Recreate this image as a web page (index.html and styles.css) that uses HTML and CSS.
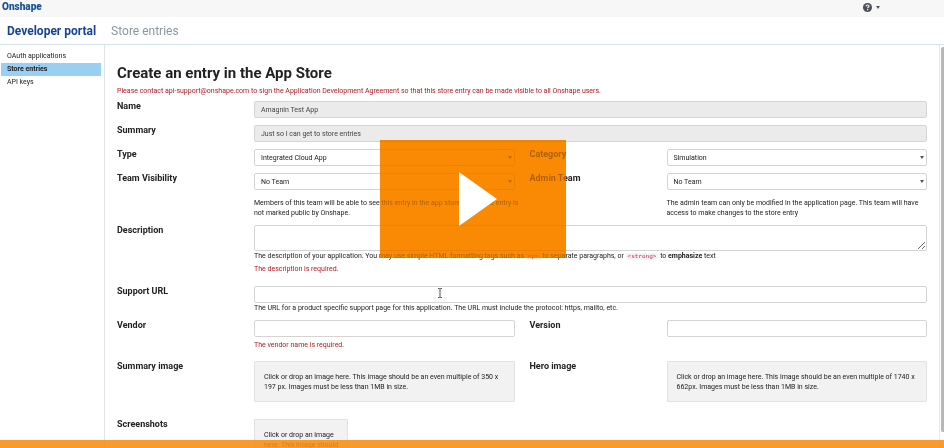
FILE: index.html
```html
<!DOCTYPE html>
<html lang="en">
<head>
<meta charset="utf-8">
<title>Developer portal</title>
<link rel="stylesheet" href="styles.css">
</head>
<body>
<header class="topbar">
  <a class="brand" href="#">Onshape</a>
  <button class="help" type="button" aria-label="Help">
    <svg class="help-icon" viewBox="0 0 18 18" aria-hidden="true"><circle cx="9" cy="9" r="9" fill="#4a4f55"/><path d="M6 6.800C6.200 4.900 7.400 4 9 4s3 .9 3 2.500c0 2-2.700 2.100-2.700 4.200" fill="none" stroke="#f7f7f7" stroke-width="2.400"/><circle cx="9.200" cy="13.600" r="1.500" fill="#f7f7f7"/></svg>
    <span class="caret"></span>
  </button>
</header>
<nav class="crumbs">
  <a class="portal" href="#">Developer portal</a>
  <a class="section" href="#">Store entries</a>
</nav>
<div class="layout">
  <nav class="sidebar">
    <a href="#">OAuth applications</a>
    <a class="active" href="#">Store entries</a>
    <a href="#">API keys</a>
  </nav>
  <main class="content">
    <h1>Create an entry in the App Store</h1>
    <p class="notice">Please contact api-support@onshape.com to sign the Application Development Agreement so that this store entry can be made visible to all Onshape users.</p>
    <form class="form">
      <div class="field">
        <label for="name">Name</label>
        <input id="name" type="text" value="Amagnin Test App" disabled>
      </div>
      <div class="field">
        <label for="summary">Summary</label>
        <input id="summary" type="text" value="Just so I can get to store entries" disabled>
      </div>
      <div class="pair">
        <div class="field">
          <label for="type">Type</label>
          <div class="select"><select id="type"><option>Integrated Cloud App</option></select></div>
        </div>
        <div class="field">
          <label for="category">Category</label>
          <div class="select"><select id="category"><option>Simulation</option></select></div>
        </div>
      </div>
      <div class="pair">
        <div class="field">
          <label for="team">Team Visibility</label>
          <div>
            <div class="select"><select id="team"><option>No Team</option></select></div>
            <p class="hint spaced">Members of this team will be able to see this entry in the app store even if the entry is<br>not marked public by Onshape.</p>
          </div>
        </div>
        <div class="field">
          <label for="admin">Admin Team</label>
          <div>
            <div class="select"><select id="admin"><option>No Team</option></select></div>
            <p class="hint spaced">The admin team can only be modified in the application page. This team will have<br>access to make changes to the store entry</p>
          </div>
        </div>
      </div>
      <div class="field roomy">
        <label for="description">Description</label>
        <div>
          <textarea id="description"></textarea>
          <p class="hint">The description of your application. You may use simple HTML formatting tags such as <code>&lt;p&gt;</code> to separate paragraphs, or <code>&lt;strong&gt;</code> to <strong>emphasize</strong> text</p>
          <p class="error">The description is required.</p>
        </div>
      </div>
      <div class="field">
        <label for="url">Support URL</label>
        <div>
          <div class="pointed">
            <input id="url" type="text">
            <svg class="ibeam" viewBox="0 0 6 10" aria-hidden="true"><path d="M1 .5h1.500L3 1l.5-.5H5M3 1v8M1 9.500h1.500L3 9l.5.5H5" fill="none" stroke="#555"/></svg>
          </div>
          <p class="hint">The URL for a product specific support page for this application. The URL must include the protocol: https, mailto, etc.</p>
        </div>
      </div>
      <div class="pair vendor-row">
        <div class="field">
          <label for="vendor">Vendor</label>
          <div>
            <input id="vendor" type="text">
            <p class="error">The vendor name is required.</p>
          </div>
        </div>
        <div class="field">
          <label for="version">Version</label>
          <input id="version" type="text">
        </div>
      </div>
      <div class="pair images">
        <div class="field">
          <label for="summary-image">Summary image</label>
          <button class="drop" id="summary-image" type="button">Click or drop an image here. This image should be an even multiple of 350 x 197 px. Images must be less than 1MB in size.</button>
        </div>
        <div class="field">
          <label for="hero-image">Hero image</label>
          <button class="drop" id="hero-image" type="button">Click or drop an image here. This image should be an even multiple of 1740 x 662px. Images must be less than 1MB in size.</button>
        </div>
      </div>
      <div class="field">
        <label for="screenshots">Screenshots</label>
        <button class="drop small" id="screenshots" type="button">Click or drop an image here. This image should</button>
      </div>
    </form>
  </main>
  <div class="scrollbar"></div>
</div>
<div class="play-area tint"></div>
<button class="play-area play" type="button" aria-label="Play video">
  <svg class="play-icon" viewBox="0 0 38 54" aria-hidden="true"><path d="M0 0l38 27L0 54z" fill="#fff"/></svg>
</button>
<div class="progress"></div>
</body>
</html>
```
FILE: styles.css
```css
* { box-sizing: border-box; }

body {
  margin: 0;
  height: 100vh;
  overflow: hidden;
  display: flex;
  flex-direction: column;
  position: relative;
  background: #fff;
  color: #222;
  font: 7px/10px Roboto, "Liberation Sans", sans-serif;
}

a { color: inherit; text-decoration: none; }
p, h1 { margin: 0; }
button, input, select, textarea { font: inherit; color: inherit; margin: 0; }

.topbar {
  flex: none;
  display: flex;
  align-items: center;
  justify-content: space-between;
  height: 17px;
  padding: 0 64px 3px 2px;
  background: #f7f7f7;
}
.brand { color: #17509a; font-size: 10px; line-height: 14px; font-weight: 900; }
.help {
  display: flex;
  align-items: center;
  gap: 4px;
  padding: 0;
  border: 0;
  background: none;
}
.help-icon { width: 9px; height: 9px; }
.caret, .select::after {
  border: 2px solid transparent;
  border-top: 3px solid #555;
  border-bottom: 0;
}

.crumbs {
  flex: none;
  display: flex;
  align-items: center;
  gap: 15px;
  height: 28px;
  padding: 1px 7px 0;
  border-bottom: 1px solid #d5e2e6;
  font-size: 12px;
  line-height: 16px;
}
.portal { color: #17419a; font-weight: 700; }
.section { color: #8a969e; }

.layout { flex: 1; min-height: 0; display: flex; }
.sidebar {
  flex: none;
  width: 105px;
  padding: 5px 3px 0 1px;
  border-right: 1px solid #dfe5e7;
}
.sidebar a { display: block; padding: 0 6px; line-height: 13px; }
.sidebar .active { background: #99cff2; font-weight: 700; }

.content { flex: 1; min-width: 0; overflow: hidden; padding: 18px 12px 0; }
h1 { font-size: 15px; line-height: 20px; font-weight: 700; }
.notice { margin-top: 3px; color: #b01923; line-height: 10px; }

.form { display: flex; flex-direction: column; gap: 7px; margin-top: 5px; }
.pair { display: grid; grid-template-columns: 1fr 1fr; gap: 15px; }
.field { display: grid; grid-template-columns: 137px minmax(0, 1fr); align-items: start; }
.roomy { margin-bottom: 5px; }
.vendor-row { margin-bottom: 4px; }
.images { margin-bottom: 10px; }
label { font-size: 9px; line-height: 10px; font-weight: 700; }

input, select, textarea {
  display: block;
  width: 100%;
  height: 17px;
  padding: 0 6px;
  border: 1px solid #d4d4d4;
  border-radius: 2px;
  background: #fff;
}
input:disabled { background: #ebebeb; color: #444; }
textarea { height: 26px; }
.select { position: relative; }
.select select { appearance: none; }
.select::after { content: ""; position: absolute; right: 3px; top: 7px; }

.hint { line-height: 10px; }
.spaced { margin-top: 8px; white-space: nowrap; }
.error { margin-top: 3px; color: #b01923; }
code {
  padding: 0 2px;
  border-radius: 2px;
  background: #f9f2f4;
  color: #b8254c;
  font: 6px/8px "Liberation Mono", monospace;
}

.pointed { position: relative; }
.ibeam { position: absolute; left: 183px; top: 2px; width: 6px; height: 10px; }

.drop {
  width: 100%;
  min-height: 41px;
  padding: 9px;
  border: 1px solid #e2e2e2;
  border-radius: 1px;
  background: #f2f2f2;
  text-align: left;
}
.drop.small { width: 94px; padding-right: 4px; }

.scrollbar { flex: none; width: 5px; padding: 2px 0 8px; border-left: 1px solid #e8e8e8; }
.scrollbar::after {
  content: "";
  display: block;
  width: 3px;
  height: 98%;
  margin-left: auto;
  border-radius: 2px 0 0 2px;
  background: #b8b8b8;
}

.play-area {
  position: absolute;
  left: calc(50% - 92px);
  top: calc(50% - 84px);
  width: 186px;
  height: 118px;
}
/* Two layers keep the orange saturated while the form stays faintly visible. */
.tint { background: #fa8a05; mix-blend-mode: multiply; }
.play {
  display: grid;
  place-items: center;
  padding: 0 0 0 10px;
  border: 0;
  background: rgba(250, 138, 5, 0.65);
}
.play-icon { width: 38px; height: 54px; }
.progress {
  position: absolute;
  inset: auto 0 0;
  height: 8px;
  background: rgba(250, 140, 15, 0.88);
}
```
